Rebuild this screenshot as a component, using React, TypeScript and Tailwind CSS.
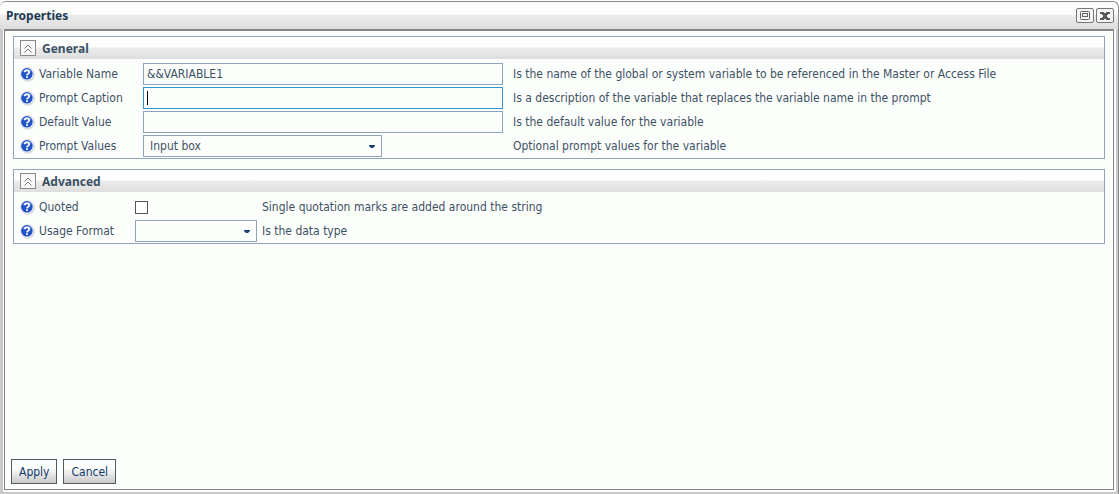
import { ReactNode } from 'react';

const fieldBorder = 'border border-[#8fa3bd]';
const heading = "pt-px font-['Noto_Sans','DejaVu_Sans',sans-serif] font-bold";

function HelpIcon() {
  return (
    <svg width="15" height="15" viewBox="0 0 15 15" className="shrink-0" aria-hidden="true">
      <circle cx="7.5" cy="7.5" r="7.2" fill="#c9ccd4" />
      <circle cx="7" cy="7" r="6.8" fill="#eef0f6" />
      <circle cx="6.9" cy="6.8" r="5.8" fill="#2152c8" />
      <path d="M2.2 5.2C3.2 1.6 10 0.6 11.8 5C8.4 3.4 5 3.6 2.2 5.2Z" fill="#5b83dc" />
      <path
        d="M4.7 5.2C4.8 2.7 9.3 2.7 9.3 5.1C9.3 6.8 7 6.6 7 8.4"
        fill="none"
        stroke="#fff"
        strokeWidth="1.7"
      />
      <rect x="6.1" y="9.3" width="1.8" height="1.7" fill="#fff" />
    </svg>
  );
}

function Panel({ title, children }: { title: string; children: ReactNode }) {
  return (
    <section className="border border-[#8fa3bd]">
      <header className="flex h-[22px] items-center gap-1.5 bg-linear-to-b from-[#fcfefc] from-45% via-[#ececec] via-50% to-[#dedede] pl-1.5">
        <button
          type="button"
          aria-label={`Collapse ${title}`}
          className="flex size-4 items-center justify-center border border-[#8a8a8a] bg-[#f6f7f6]"
        >
          <svg width="8" height="9" viewBox="0 0 8 9" fill="none" stroke="#777" strokeWidth="1">
            <path d="M0.5 4.5L4 1L7.5 4.5M0.5 8.5L4 5L7.5 8.5" />
          </svg>
        </button>
        <h2 className={heading}>{title}</h2>
      </header>
      <div className="pt-[3px] pl-1.5">{children}</div>
    </section>
  );
}

type RowProps = {
  id: string;
  label: string;
  labelWidth: string;
  fieldWidth: string;
  hint: string;
  children: ReactNode;
};

function Row({ id, label, labelWidth, fieldWidth, hint, children }: RowProps) {
  return (
    <div className="flex h-6 items-center">
      <div className={`flex shrink-0 items-center gap-1 ${labelWidth}`}>
        <HelpIcon />
        <label htmlFor={id}>{label}</label>
      </div>
      <div className={`flex shrink-0 items-center ${fieldWidth}`}>{children}</div>
      <span className="whitespace-nowrap">{hint}</span>
    </div>
  );
}

function Dropdown({ id, width, options }: { id: string; width: string; options: string[] }) {
  return (
    <div className={`relative ${width}`}>
      <select id={id} className={`block h-[22px] w-full appearance-none bg-transparent pl-1.5 ${fieldBorder}`}>
        {options.map((option) => (
          <option key={option}>{option}</option>
        ))}
      </select>
      <svg
        width="6"
        height="4"
        viewBox="0 0 6 4"
        className="pointer-events-none absolute top-2.5 right-[7px]"
        aria-hidden="true"
      >
        <path d="M0 0H6V1L4 3H2L0 1Z" fill="#1d3f7c" />
      </svg>
    </div>
  );
}

const general = { labelWidth: 'w-[123px]', fieldWidth: 'w-[370px]' };
const advanced = { labelWidth: 'w-[115px]', fieldWidth: 'w-[127px]' };
const windowButton =
  'flex h-[15px] w-[18px] items-center justify-center rounded-xs border border-[#777] bg-[#f4f4f4]';
const actionButton =
  'h-[25px] border border-[#555a60] bg-linear-to-b from-[#fcfefc] from-35% to-[#c9c9c9] px-[7px] text-[#12396c]';
const textBox = 'block h-[22px] w-[360px] bg-transparent px-[3px] outline-none';

export default function App() {
  return (
    <div className="flex min-h-screen flex-col bg-[#fcfefc] pt-px font-['DejaVu_Sans_Condensed','DejaVu_Sans',sans-serif] text-xs text-[#3c5164]">
      <div className="flex flex-1 flex-col rounded-t-md border-t border-r border-[#8a8a8a]">
        <div className="flex h-[27px] items-center justify-between bg-linear-to-b from-transparent from-45% via-[#ebebeb] via-50% to-[#dedede] pr-1 pl-1.5">
          <h1 className={`${heading} text-[#213a52]`}>Properties</h1>
          <div className="flex gap-0.5">
            <button type="button" aria-label="Maximize" className={windowButton}>
              <svg width="10" height="9" viewBox="0 0 10 9" fill="none" stroke="#666">
                <rect x="0.5" y="0.5" width="9" height="8" rx="1" />
                <rect x="2.5" y="2.5" width="5" height="3" />
              </svg>
            </button>
            <button type="button" aria-label="Close" className={windowButton}>
              <svg width="10" height="8" viewBox="0 0 10 8" fill="#5a5a5a">
                <path d="M0 0H4V1H6V0H10V2H8V3H7V5H8V6H10V8H6V7H4V8H0V6H2V5H3V3H2V2H0Z" />
              </svg>
            </button>
          </div>
        </div>
        <div className="flex flex-1 flex-col border-r-2 border-b-2 border-l-3 border-[#c8c9c8] pr-0.5 pb-0.5 pl-px">
          <main className="flex flex-1 flex-col border border-t-2 border-[#858585] pt-[5px] pr-2 pb-[5px] pl-1.5">
            <div className="flex flex-col gap-2.5 pl-0.5">
              <Panel title="General">
                <Row id="name" label="Variable Name" hint="Is the name of the global or system variable to be referenced in the Master or Access File" {...general}>
                  <input id="name" type="text" defaultValue="&&VARIABLE1" className={`${textBox} ${fieldBorder}`} />
                </Row>
                <Row id="caption" label="Prompt Caption" hint="Is a description of the variable that replaces the variable name in the prompt" {...general}>
                  <div className="relative">
                    <input id="caption" type="text" className={`${textBox} border border-[#3393cf]`} />
                    <span className="absolute top-1 left-1 h-3.5 w-px bg-black" />
                  </div>
                </Row>
                <Row id="default" label="Default Value" hint="Is the default value for the variable" {...general}>
                  <input id="default" type="text" className={`${textBox} ${fieldBorder}`} />
                </Row>
                <Row id="values" label="Prompt Values" hint="Optional prompt values for the variable" {...general}>
                  <Dropdown id="values" width="w-[239px]" options={['Input box']} />
                </Row>
              </Panel>
              <Panel title="Advanced">
                <Row id="quoted" label="Quoted" hint="Single quotation marks are added around the string" {...advanced}>
                  <input id="quoted" type="checkbox" className="size-[13px] appearance-none border border-[#555]" />
                </Row>
                <Row id="usage" label="Usage Format" hint="Is the data type" {...advanced}>
                  <Dropdown id="usage" width="w-[122px]" options={['']} />
                </Row>
              </Panel>
            </div>
            <footer className="mt-auto flex gap-1.5">
              <button type="button" className={actionButton}>Apply</button>
              <button type="button" className={actionButton}>Cancel</button>
            </footer>
          </main>
        </div>
      </div>
    </div>
  );
}
